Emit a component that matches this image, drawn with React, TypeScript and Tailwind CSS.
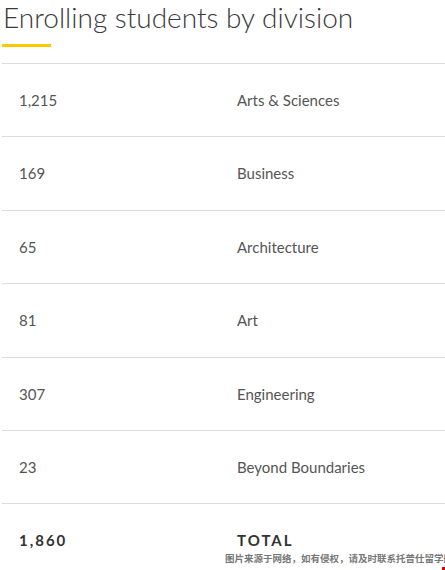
import React from "react";

const rows = [
  { count: "1,215", division: "Arts & Sciences" },
  { count: "169", division: "Business" },
  { count: "65", division: "Architecture" },
  { count: "81", division: "Art" },
  { count: "307", division: "Engineering" },
  { count: "23", division: "Beyond Boundaries" },
];

const App = () => {
  return (
    <div
      className="relative min-h-screen bg-white overflow-hidden pl-[2px]"
      style={{ fontFamily: "Lato, 'Noto Sans', sans-serif" }}
    >
      <h1 className="pl-[1px] text-[28px] leading-[34px] font-light text-[#3a3a3a] whitespace-nowrap">
        Enrolling students by division
      </h1>
      <div className="mt-[10px] h-[3px] w-[49px] bg-[#fcc800]" />

      <div className="mt-[16px] w-[460px] border-t border-[#dcdcdc]">
        {rows.map((row) => (
          <div
            key={row.division}
            className="flex items-center h-[73.4px] border-b border-[#dcdcdc] text-[15px] text-[#555]"
          >
            <div className="w-[235px] pl-[17px]">{row.count}</div>
            <div>{row.division}</div>
          </div>
        ))}
        <div className="flex items-center h-[72px] text-[15px] font-bold tracking-[2px] text-[#333]">
          <div className="w-[235px] pl-[17px]">1,860</div>
          <div>TOTAL</div>
        </div>
      </div>

      <div className="absolute left-[225px] top-[552px] w-[220px] overflow-hidden">
        <div
          className="whitespace-nowrap text-[9.5px] leading-[12px] font-bold text-[#777]"
          style={{ fontFamily: "'Noto Sans CJK SC', sans-serif" }}
        >
          图片来源于网络，如有侵权，请及时联系托普仕留学删除
        </div>
      </div>
      <div className="absolute left-[442px] top-[567px] w-[3px] h-[3px] bg-[#d00]" />
    </div>
  );
};

export default App;
